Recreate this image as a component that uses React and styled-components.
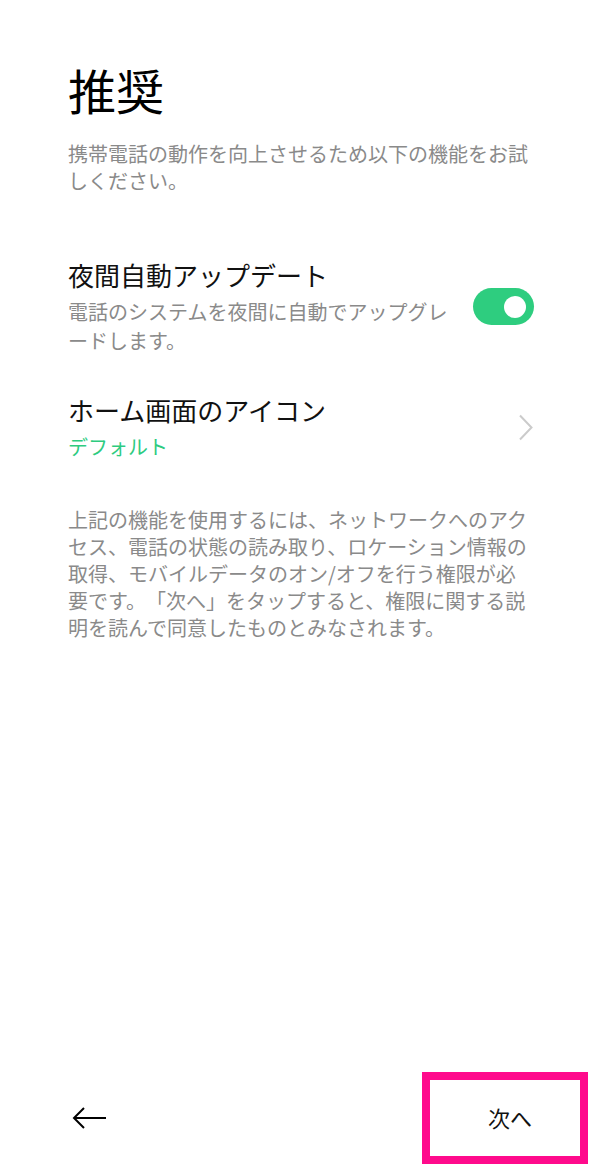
import React, { useState } from "react";
import styled, { createGlobalStyle } from "styled-components";

const GlobalStyle = createGlobalStyle`
  html, body { margin: 0; padding: 0; background: #ffffff; }
  body {
    font-family: "Noto Sans CJK JP", "Noto Sans", sans-serif;
    text-spacing-trim: space-all;
  }
  * { box-sizing: border-box; }
`;

const Page = styled.div`
  min-height: 100vh;
  display: flex;
  flex-direction: column;
  background: #ffffff;
`;

const Content = styled.main`
  display: flex;
  flex-direction: column;
  padding: 60px 66px 0 68px;
`;

const Title = styled.h1`
  margin: 0;
  font-size: 48px;
  line-height: 58px;
  font-weight: 400;
  color: #000;
`;

const Lead = styled.p`
  margin: 22px 0 0;
  font-size: 20px;
  line-height: 27px;
  color: #8a8a8a;
`;

const List = styled.div`
  display: flex;
  flex-direction: column;
  gap: 38px;
  margin-top: 64px;
`;

const Row = styled.div`
  display: flex;
  align-items: center;
  gap: 24px;
`;

const RowText = styled.div`
  flex: 1;
  display: flex;
  flex-direction: column;
  gap: 5px;
`;

const RowTitle = styled.div`
  font-size: 26px;
  line-height: 34px;
  color: #111;
`;

const RowSub = styled.div`
  font-size: 20px;
  line-height: 29px;
  color: ${(p) => (p.$accent ? "#2ecb7f" : "#8a8a8a")};
`;

const Switch = styled.button`
  flex: none;
  width: 61px;
  height: 37px;
  border: none;
  border-radius: 19px;
  background: ${(p) => (p.$on ? "#2ecd7f" : "#d5d5d5")};
  cursor: pointer;
  display: flex;
  align-items: center;
  justify-content: ${(p) => (p.$on ? "flex-end" : "flex-start")};
  padding: 0 8px;
`;

const Knob = styled.span`
  width: 22px;
  height: 22px;
  border-radius: 50%;
  background: #ffffff;
`;

const Chevron = styled.svg`
  flex: none;
  width: 15px;
  height: 27px;
  margin-right: 1px;
`;

const Note = styled.p`
  margin: 45px 0 0;
  font-size: 20px;
  line-height: 27px;
  color: #8a8a8a;
`;

const Footer = styled.footer`
  margin-top: auto;
  display: flex;
  align-items: center;
  justify-content: space-between;
  padding: 0 12px 6px 72px;
`;

const BackButton = styled.button`
  border: none;
  background: transparent;
  padding: 0;
  width: 34px;
  height: 24px;
  display: flex;
  cursor: pointer;
`;

const NextButton = styled.button`
  width: 166px;
  height: 92px;
  border: 8px solid #ff0a8c;
  background: #ffffff;
  font-family: "Noto Sans CJK JP", "Noto Sans", sans-serif;
  font-size: 22px;
  color: #111;
  display: flex;
  align-items: center;
  justify-content: center;
  padding: 0 0 2px 10px;
  cursor: pointer;
`;

export default function App() {
  const [on, setOn] = useState(true);
  return (
    <Page>
      <GlobalStyle />
      <Content>
        <Title>推奨</Title>
        <Lead>携帯電話の動作を向上させるため以下の機能をお試しください。</Lead>
        <List>
          <Row>
            <RowText>
              <RowTitle>夜間自動アップデート</RowTitle>
              <RowSub>電話のシステムを夜間に自動でアップグレードします。</RowSub>
            </RowText>
            <Switch $on={on} onClick={() => setOn(!on)} aria-label="toggle">
              <Knob />
            </Switch>
          </Row>
          <Row>
            <RowText>
              <RowTitle>ホーム画面のアイコン</RowTitle>
              <RowSub $accent>デフォルト</RowSub>
            </RowText>
            <Chevron viewBox="0 0 15 27">
              <path d="M2 1.5 L13.5 13.5 L2 25.5" fill="none" stroke="#cbcbcb" strokeWidth="2" />
            </Chevron>
          </Row>
        </List>
        <Note>
          上記の機能を使用するには、ネットワークへのアクセス、電話の状態の読み取り、ロケーション情報の取得、モバイルデータのオン/オフを行う権限が必要です。「次へ」をタップすると、権限に関する説明を読んで同意したものとみなされます。
        </Note>
      </Content>
      <Footer>
        <BackButton aria-label="back">
          <svg width="34" height="24" viewBox="0 0 34 24">
            <path d="M2 12 H34" stroke="#000" strokeWidth="2" fill="none" />
            <path d="M12 2 L2 12 L12 22" stroke="#000" strokeWidth="2" fill="none" />
          </svg>
        </BackButton>
        <NextButton>次へ</NextButton>
      </Footer>
    </Page>
  );
}
